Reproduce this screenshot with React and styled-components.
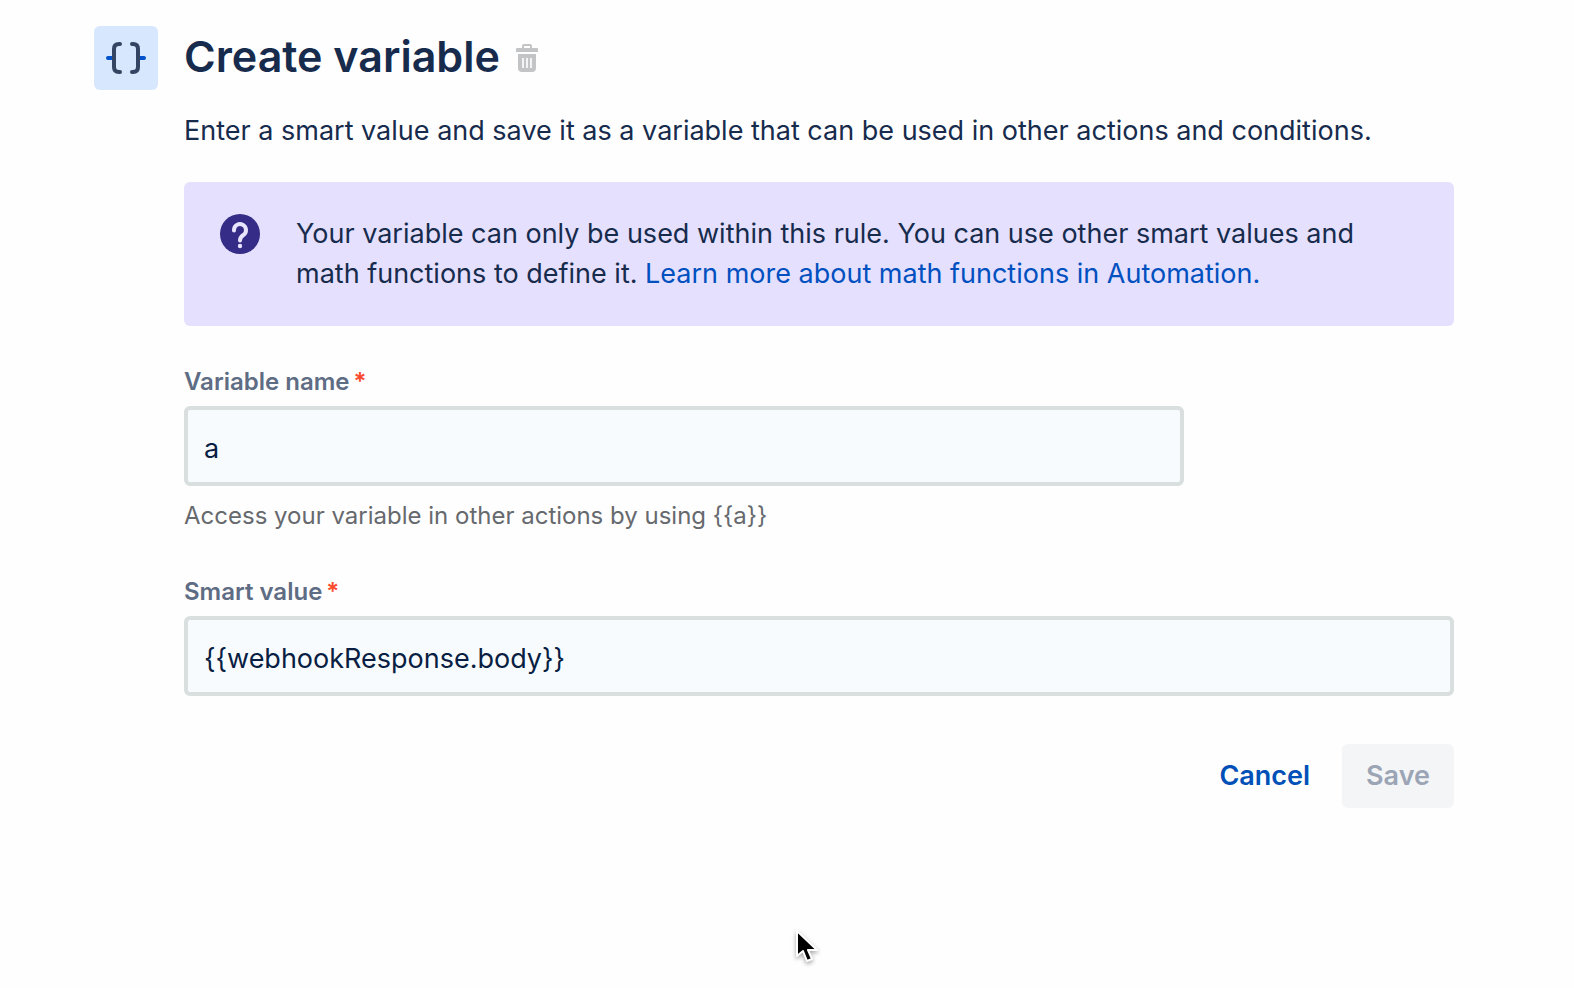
import React, { useState } from "react";
import styled, { createGlobalStyle } from "styled-components";

const GlobalStyle = createGlobalStyle`
  *, *::before, *::after { box-sizing: border-box; }
  body {
    margin: 0;
    background: #fefefe;
    color: #172b4d;
    font-family: Inter, "Liberation Sans", sans-serif;
    font-size: 27px;
    line-height: 40px;
  }
`;

const Page = styled.main`
  position: relative;
  display: flex;
  align-items: flex-start;
  gap: 26px;
  min-height: 100vh;
  padding: 26px 120px 26px 94px;
`;

const IconTile = styled.div`
  flex: none;
  display: flex;
  width: 64px;
  height: 64px;
  border-radius: 6px;
  background: #d6e7fe;
`;

const Content = styled.div`
  flex: 1;
  min-width: 0;
`;

const Header = styled.header`
  display: flex;
  align-items: center;
  gap: 16px;
  height: 60px;
`;

const Title = styled.h1`
  margin: 0;
  font-size: 43px;
  line-height: 60px;
  font-weight: 600;
`;

const IconButton = styled.button`
  display: flex;
  padding: 4px 0 0;
  border: 0;
  background: none;
  cursor: pointer;
`;

const Description = styled.p`
  margin: 25px 0 31px;
`;

const Banner = styled.section`
  display: flex;
  gap: 36px;
  padding: 32px 36px;
  border-radius: 6px;
  background: #e4e0fd;

  svg { flex: none; }
  p { margin: 0; }
`;

const Link = styled.a`
  color: #0050c0;
  text-decoration: none;
`;

const Form = styled.form`
  display: flex;
  flex-direction: column;
  gap: 44px;
  margin-top: 40px;
`;

const Field = styled.div`
  display: flex;
  flex-direction: column;
  max-width: ${(p) => (p.$narrow ? "1000px" : "none")};
`;

const Label = styled.label`
  margin-bottom: 8px;
  color: #5e6c84;
  font-size: 24px;
  line-height: 32px;
  font-weight: 600;
`;

const Required = styled.span`
  margin-left: 4px;
  color: #fb4b2c;
`;

const TextInput = styled.input`
  width: 100%;
  height: 80px;
  padding: 4px 16px 0;
  border: 4px solid #d9dede;
  border-radius: 6px;
  outline: 0;
  background: #f7fbfe;
  color: #091e42;
  font: inherit;
`;

const Hint = styled.p`
  margin: 14px 0 0;
  color: #66696d;
  font-size: 24px;
  line-height: 32px;
`;

const Actions = styled.div`
  display: flex;
  justify-content: flex-end;
  gap: 8px;
  margin-top: 4px;
`;

const Button = styled.button`
  height: 64px;
  padding: 0 24px;
  border: 0;
  border-radius: 6px;
  background: ${(p) => (p.disabled ? "#f4f5f7" : "transparent")};
  color: ${(p) => (p.disabled ? "#9ba5b5" : "#0050b8")};
  font: inherit;
  font-weight: 600;
`;

const Pointer = styled.svg`
  position: absolute;
  left: 794px;
  top: 927px;
  pointer-events: none;
  filter: drop-shadow(0 2px 2px rgba(0, 0, 0, 0.35));
`;

function BracesIcon() {
  return (
    <svg width="64" height="64" viewBox="0 0 64 64" fill="none" strokeLinecap="round" aria-hidden="true">
      <path d="M14 32h6M44 32h6" stroke="#0052cc" strokeWidth="4" />
      <path
        d="M26 18h-1q-5 0-5 5v18q0 5 5 5h1M38 18h1q5 0 5 5v18q0 5-5 5h-1"
        stroke="#344563"
        strokeWidth="4"
      />
    </svg>
  );
}

function TrashIcon() {
  return (
    <svg width="22" height="28" viewBox="0 0 22 28" aria-hidden="true">
      <path d="M7 5V2q0-1 1-1h6q1 0 1 1v3" fill="none" stroke="#c3c4c6" strokeWidth="2" />
      <path d="M1 4h20q1 0 1 1v3H0V5q0-1 1-1z" fill="#c3c4c6" />
      <path d="M2 10h18v14q0 4-4 4H6q-4 0-4-4z" fill="#c3c4c6" />
      <path d="M7 14v10M11 14v10M15 14v10" stroke="#f4f4f4" strokeWidth="2" />
    </svg>
  );
}

function QuestionIcon() {
  return (
    <svg width="40" height="40" viewBox="0 0 40 40" fill="none" aria-hidden="true">
      <circle cx="20" cy="20" r="20" fill="#352c87" />
      <path
        d="M14 16.500V16a6 6 0 1 1 9.500 4.900C21.300 22.400 20 23.200 20 26.500"
        stroke="#e8e5fc"
        strokeWidth="4"
        strokeLinecap="round"
      />
      <circle cx="20" cy="32" r="2.200" fill="#e8e5fc" />
    </svg>
  );
}

export default function App() {
  const [name, setName] = useState("a");
  const [value, setValue] = useState("{{webhookResponse.body}}");

  return (
    <>
      <GlobalStyle />
      <Page>
        <IconTile>
          <BracesIcon />
        </IconTile>
        <Content>
          <Header>
            <Title>Create variable</Title>
            <IconButton type="button" aria-label="Delete">
              <TrashIcon />
            </IconButton>
          </Header>
          <Description>
            Enter a smart value and save it as a variable that can be used in other actions and conditions.
          </Description>
          <Banner>
            <QuestionIcon />
            <p>
              Your variable can only be used within this rule. You can use other smart values and
              <br />
              math functions to define it. <Link href="#math">Learn more about math functions in Automation.</Link>
            </p>
          </Banner>
          <Form onSubmit={(e) => e.preventDefault()}>
            <Field $narrow>
              <Label htmlFor="variable-name">
                Variable name<Required>*</Required>
              </Label>
              <TextInput id="variable-name" value={name} onChange={(e) => setName(e.target.value)} />
              <Hint>Access your variable in other actions by using {`{{${name}}}`}</Hint>
            </Field>
            <Field>
              <Label htmlFor="smart-value">
                Smart value<Required>*</Required>
              </Label>
              <TextInput id="smart-value" value={value} onChange={(e) => setValue(e.target.value)} />
            </Field>
            <Actions>
              <Button type="button">Cancel</Button>
              <Button type="submit" disabled>
                Save
              </Button>
            </Actions>
          </Form>
        </Content>
        <Pointer width="26" height="38" viewBox="0 0 26 38" aria-hidden="true">
          <path
            d="M3 4v25l6-5 4 10 5-2-4-9h9z"
            fill="#000"
            stroke="#fff"
            strokeWidth="2"
            strokeLinejoin="round"
          />
        </Pointer>
      </Page>
    </>
  );
}
